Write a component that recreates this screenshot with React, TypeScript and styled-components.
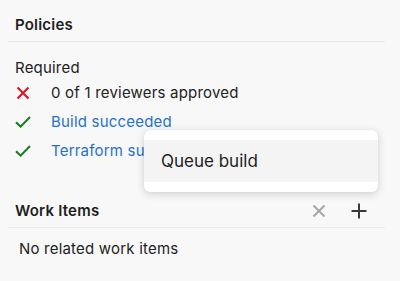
import styled, { createGlobalStyle } from "styled-components";

const GlobalStyle = createGlobalStyle`
  html, body {
    margin: 0;
    padding: 0;
    background: #f8f8f8;
  }
  body {
    font-family: Inter, "Noto Sans", "Liberation Sans", sans-serif;
    color: #222222;
    -webkit-font-smoothing: antialiased;
  }
`;

const Page = styled.div`
  position: relative;
  width: 400px;
  height: 281px;
  overflow: hidden;
  background: #f8f8f8;
  padding: 0 15px 0 8px;
  box-sizing: border-box;
`;

const SectionHeader = styled.div<{ $top: number }>`
  display: flex;
  align-items: center;
  margin-top: ${(p) => p.$top}px;
  padding: 15px 6px 6px 7px;
  border-bottom: 1px solid #e9e9e9;
  height: 20px;
`;

const SectionTitle = styled.h3`
  flex: 1;
  margin: 0;
  font-size: 15px;
  line-height: 20px;
  font-weight: 600;
  letter-spacing: 0.2px;
  color: #1e1e1e;
`;

const Body = styled.div<{ $top: number; $left: number }>`
  padding: ${(p) => p.$top}px 0 0 ${(p) => p.$left}px;
`;

const Label = styled.div`
  font-size: 15px;
  line-height: 20px;
  letter-spacing: 0.2px;
  color: #222222;
`;

const PolicyRow = styled.div`
  display: flex;
  align-items: center;
  height: 29px;
`;

const StatusIcon = styled.span`
  display: flex;
  align-items: center;
  justify-content: center;
  width: 16px;
  margin-right: 20px;
`;

const RowText = styled.span<{ $link?: boolean }>`
  font-size: 15px;
  line-height: 20px;
  letter-spacing: 0.2px;
  white-space: nowrap;
  color: ${(p) => (p.$link ? "#1f73c9" : "#222222")};
`;

const IconButton = styled.button<{ $muted?: boolean }>`
  display: flex;
  align-items: center;
  justify-content: center;
  width: 40px;
  height: 20px;
  padding: 0;
  border: none;
  background: transparent;
  color: ${(p) => (p.$muted ? "#a6a6a6" : "#3a3a3a")};
`;

const Menu = styled.div`
  position: absolute;
  left: 144px;
  top: 130px;
  width: 234px;
  padding: 10px 0;
  background: #ffffff;
  border-radius: 6px;
  box-shadow: 0 2px 8px rgba(0, 0, 0, 0.16), 0 0 1px rgba(0, 0, 0, 0.12);
`;

const MenuItem = styled.div`
  height: 42px;
  line-height: 42px;
  padding-left: 17px;
  font-size: 17px;
  color: #1e1e1e;
  background: #f4f4f4;
`;

const Cross = ({ color, size }: { color: string; size: number }) => (
  <svg width={size} height={size} viewBox="0 0 14 14" fill="none">
    <path d="M1.5 1.5L12.5 12.5M12.5 1.5L1.5 12.5" stroke={color} strokeWidth="2" />
  </svg>
);

const Check = () => (
  <svg width="16" height="12" viewBox="0 0 16 12" fill="none">
    <path d="M1 6.2L5.6 10.6L15 1" stroke="#127c1a" strokeWidth="2" />
  </svg>
);

const Plus = () => (
  <svg width="16" height="16" viewBox="0 0 16 16" fill="none">
    <path d="M8 0.5V15.5M0.5 8H15.5" stroke="currentColor" strokeWidth="2" />
  </svg>
);

const policies = [
  { ok: false, text: "0 of 1 reviewers approved" },
  { ok: true, text: "Build succeeded" },
  { ok: true, text: "Terraform succeeded" },
];

export default function App() {
  return (
    <Page>
      <GlobalStyle />
      <SectionHeader $top={0}>
        <SectionTitle>Policies</SectionTitle>
      </SectionHeader>
      <Body $top={16} $left={7}>
        <Label>Required</Label>
        {policies.map((p) => (
          <PolicyRow key={p.text}>
            <StatusIcon>{p.ok ? <Check /> : <Cross color="#e3121b" size={14} />}</StatusIcon>
            <RowText $link={p.ok}>{p.text}</RowText>
          </PolicyRow>
        ))}
      </Body>
      <SectionHeader $top={21}>
        <SectionTitle>Work Items</SectionTitle>
        <IconButton $muted aria-label="Remove">
          <Cross color="currentColor" size={14} />
        </IconButton>
        <IconButton aria-label="Add">
          <Plus />
        </IconButton>
      </SectionHeader>
      <Body $top={11} $left={11}>
        <Label>No related work items</Label>
      </Body>
      <Menu>
        <MenuItem>Queue build</MenuItem>
      </Menu>
    </Page>
  );
}
